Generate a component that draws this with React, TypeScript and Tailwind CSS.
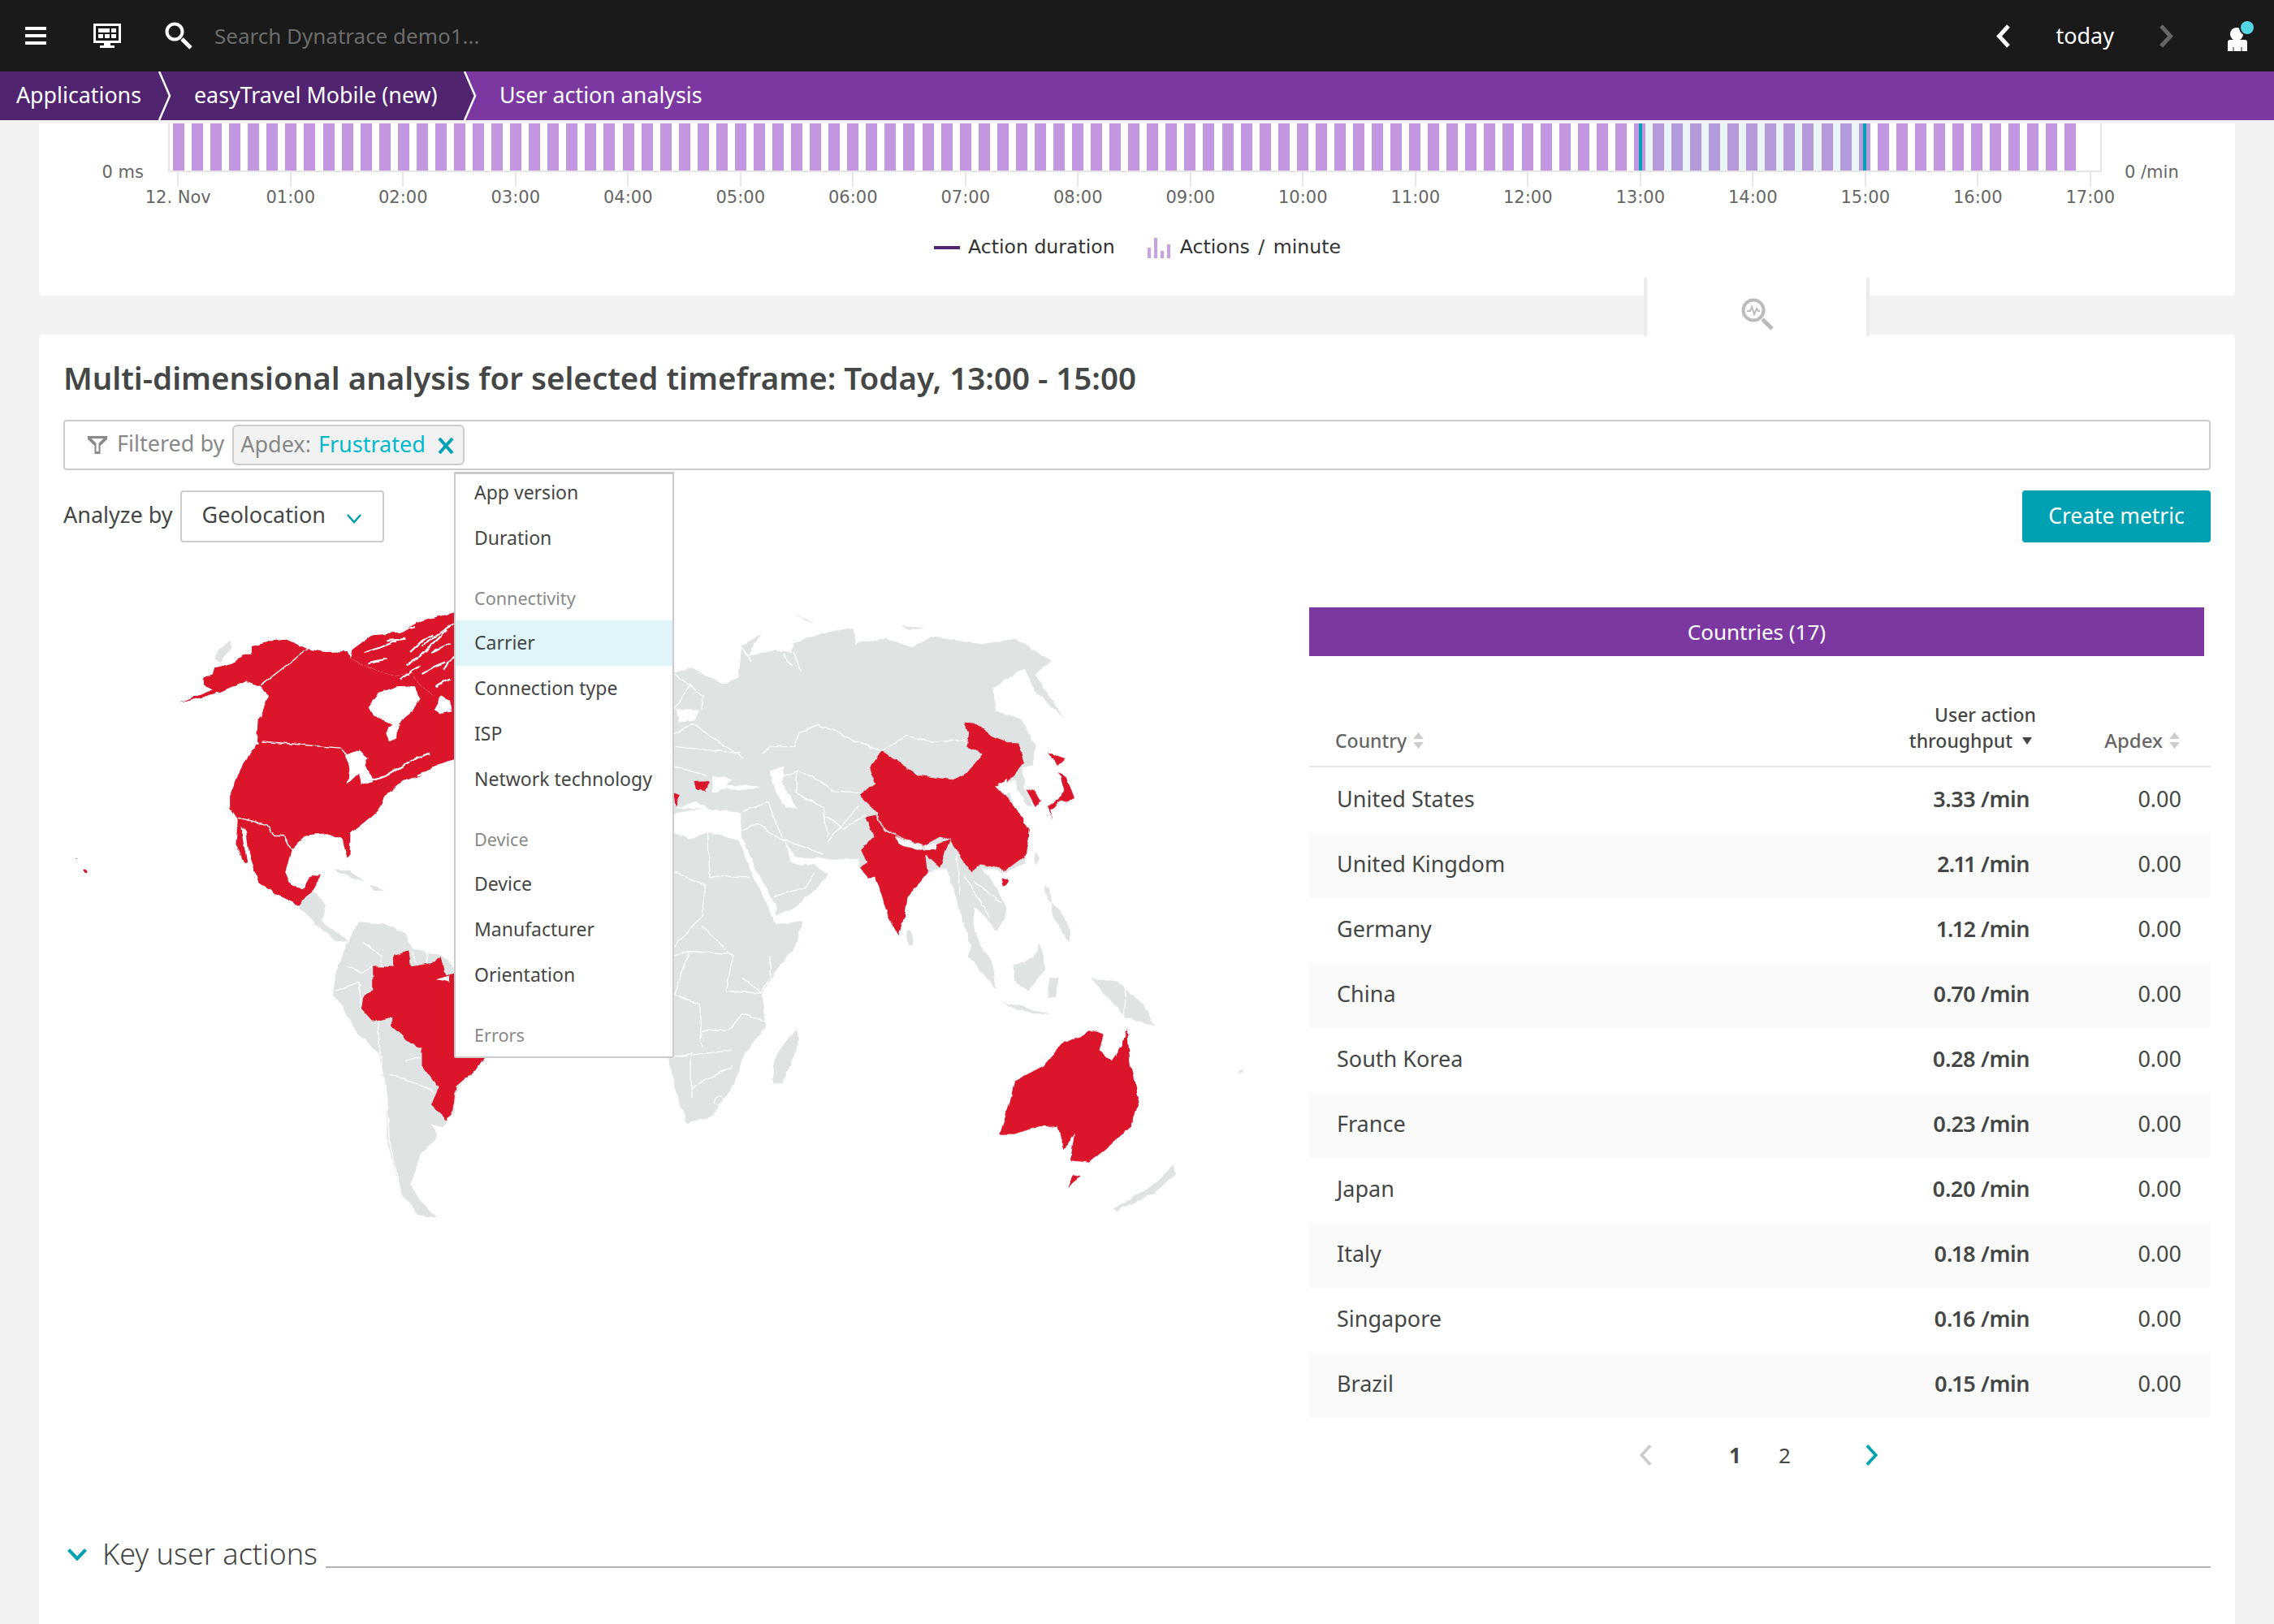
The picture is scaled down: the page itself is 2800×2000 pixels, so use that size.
const hours = ["12. Nov", "01:00", "02:00", "03:00", "04:00", "05:00", "06:00", "07:00", "08:00", "09:00", "10:00", "11:00", "12:00", "13:00", "14:00", "15:00", "16:00", "17:00"];

const bars = Array.from({ length: 102 }, (_, i) => i);

const menu = [
  { label: "App version" },
  { label: "Duration" },
  { label: "Connectivity", header: true },
  { label: "Carrier", active: true },
  { label: "Connection type" },
  { label: "ISP" },
  { label: "Network technology" },
  { label: "Device", header: true },
  { label: "Device" },
  { label: "Manufacturer" },
  { label: "Orientation" },
  { label: "Errors", header: true },
];

const countries = [
  ["United States", "3.33"],
  ["United Kingdom", "2.11"],
  ["Germany", "1.12"],
  ["China", "0.70"],
  ["South Korea", "0.28"],
  ["France", "0.23"],
  ["Japan", "0.20"],
  ["Italy", "0.18"],
  ["Singapore", "0.16"],
  ["Brazil", "0.15"],
];

const SortIcon = () => (
  <svg width="13" height="20" viewBox="0 0 13 20" className="ml-[8px] shrink-0">
    <path d="M6.5 0 13 8H0Z M0 12h13L6.5 20Z" fill="#ccc" />
  </svg>
);

const Chevron = ({ dir, color, w = 17, h = 29, sw = 5 }: { dir: "left" | "right"; color: string; w?: number; h?: number; sw?: number }) => (
  <svg width={w} height={h} viewBox="0 0 17 29" className="shrink-0">
    <path d={dir === "left" ? "M15 2 3.5 14.5 15 27" : "M2 2 13.5 14.5 2 27"} fill="none" stroke={color} strokeWidth={sw} />
  </svg>
);

const WorldMap = () => (
  <svg width="1534" height="800" viewBox="78 748 1534 800" className="shrink-0">
    <defs>
      {/* roughens the traced outlines into coastlines */}
      <filter id="coast" filterUnits="userSpaceOnUse" x="78" y="748" width="1534" height="800">
        <feTurbulence type="fractalNoise" baseFrequency="0.09" numOctaves="2" seed="4" />
        <feDisplacementMap in="SourceGraphic" scale="5" xChannelSelector="R" yChannelSelector="G" />
      </filter>
    </defs>
    <g filter="url(#coast)">
      {/* left half, traced in one scale */}
      <g transform="translate(0 700) scale(0.574 0.542)">
        <path fill="#dfe3e3" d="M460,205 L470,185 495,165 497,180 472,212 Z" />
        <path fill="#dfe3e3" d="M640,770 L655,735 670,730 700,765 690,800 725,830 748,845 720,848 680,810 Z M715,683 L745,685 785,712 750,700 Z M790,720 L825,730 800,733 Z" />
        <path fill="#dfe3e3" d="M745,850 L770,805 830,810 870,830 885,865 945,878 1000,930 1060,1000 1040,1110 985,1175 975,1230 950,1270 925,1260 940,1290 905,1330 880,1400 905,1440 938,1475 900,1470 860,1420 830,1300 830,1200 812,1100 770,1060 715,965 720,920 Z" />
        <path fill="none" stroke="#fff" strokeWidth="2.500" d="M745,905 L775,920 800,905 M720,960 L770,940 775,1000 M810,1030 L815,1100 830,1200 835,1300 860,1420 M870,1120 L905,1110 M835,1150 L905,1175 930,1190 M780,850 L820,880 820,905 M880,870 L895,895 M915,870 L915,895" />
        <path fill="#dc172a" d="M800,905 L845,905 845,880 875,870 880,905 935,895 945,880 955,925 975,920 1000,1000 1040,1110 1020,1140 980,1175 975,1220 958,1255 925,1220 940,1180 905,1130 905,1090 880,1080 840,1040 840,1020 800,1030 775,1000 780,970 800,960 Z" />
        <path fill="#fff" d="M935,935 L965,925 965,940 945,935 Z" />

        <path fill="#dc172a" d="M385,306 L430,287 470,270 520,252 528,256 475,280 425,295 Z M162,658 l6,3 -3,2 Z M178,684 h7 v8 h-5 Z" />
        <path fill="#dc172a" d="M435,248 L458,240 462,225 500,215 525,195 540,195 540,175 575,165 615,162 660,183 700,190 745,188 752,205 790,225 810,235 850,245 880,235 905,270 930,290 968,285 990,300 990,430 960,438 925,452 900,472 860,485 830,512 812,550 772,585 752,600 750,650 743,658 735,615 700,602 655,606 625,640 612,690 625,722 650,728 665,700 690,695 668,735 655,745 640,765 600,745 555,715 548,690 535,650 528,600 510,570 495,545 495,510 515,455 545,412 552,395 555,345 575,290 560,268 525,255 470,280 440,268 Z" />
        <path fill="#dc172a" d="M510,568 L518,575 520,610 530,668 524,670 506,625 Z" />
        <path fill="#dc172a" d="M755,185 L800,150 860,145 900,120 975,100 990,120 990,300 930,290 905,270 880,235 850,245 810,235 752,205 Z" />
        <path fill="none" stroke="#fff" strokeWidth="4" d="M780,192 L815,180 850,165 M820,145 L855,143 890,135 M870,218 L900,200 960,140 M905,240 L930,225 955,215 M880,190 L905,165 930,150 M860,252 L880,235 900,222 M935,268 L965,250 M765,165 L800,135 M905,175 L940,150 975,125 M790,215 L830,205 M925,190 L965,170 M950,230 L975,200 M830,165 L870,160" />
        <path fill="#fff" d="M790,315 L810,285 850,270 890,268 900,295 885,325 855,350 852,385 835,395 828,372 840,355 800,335 Z M930,320 L945,290 965,300 970,325 945,330 Z" />
        <path fill="#fff" d="M740,425 L770,412 790,430 785,450 800,480 775,492 770,465 745,490 750,455 Z" />
        <path fill="none" stroke="#fff" strokeWidth="4" d="M780,490 L830,470 885,435 920,420 M895,470 L945,450" />
        <path fill="none" stroke="#fff" strokeWidth="2.500" d="M560,265 L660,183 M560,393 L730,408 745,425 M510,567 L525,570 570,582 590,608 610,608 625,640" />
        <path fill="none" stroke="#fff" strokeWidth="3" d="M548,375 L552,400 M568,280 L560,340" />
      </g>

      {/* right half, traced in another */}
      <g transform="translate(800 700) scale(0.5102 0.542)">
        <path fill="#dfe3e3" d="M-40,620 L60,600 100,615 140,600 215,618 255,710 295,785 305,810 370,800 350,860 300,920 270,970 280,1040 225,1110 205,1170 150,1245 90,1262 60,1180 45,1110 0,1000 -100,900 -100,700 Z" />
        <path fill="none" stroke="#fff" strokeWidth="2.500" d="M140,600 L145,700 245,700 M60,690 L135,720 125,790 60,860 M125,810 L200,880 185,960 270,965 M95,870 L60,970 M225,930 L270,965 290,930 290,880 M60,880 L95,870 190,875 M60,970 L120,990 125,1090 M125,1050 L190,1050 225,1010 280,1030 M50,1110 L200,1095 M100,1100 L100,1205 M100,1180 L200,1130 M160,1215 a10,8 0 1 0 14,-12 a10,8 0 1 0 -14,12" />
        <path fill="#dfe3e3" d="M40,240 L100,225 130,240 180,262 215,245 222,175 270,150 245,180 240,200 305,185 340,190 350,170 400,150 490,135 498,170 570,160 630,178 680,155 800,172 880,160 970,210 930,240 1000,340 930,280 905,228 880,240 830,270 835,325 895,340 930,400 925,445 900,455 905,500 925,540 905,535 880,480 860,490 880,540 915,590 905,670 860,690 800,680 835,720 860,770 860,795 835,825 810,790 785,770 780,810 800,860 825,890 838,960 770,880 775,860 740,750 715,680 675,690 620,750 545,700 505,680 505,660 440,662 400,655 395,670 430,695 400,730 350,770 305,788 305,765 265,700 225,618 220,585 220,555 130,545 40,560 Z" />
        <path fill="#fff" d="M150,510 L152,470 200,480 180,492 270,495 240,503 180,502 Z M290,460 L325,450 320,490 355,545 330,545 305,510 Z M65,320 L120,320 110,345 70,350 Z M325,620 L350,655 400,660 395,672 365,675 340,665 Z M105,235 L175,255 130,240 Z M60,545 L110,530 140,545 Z" />
        <path fill="none" stroke="#fff" strokeWidth="3" d="M345,190 L365,235 M320,195 L345,220 M225,180 L245,210" />
        <path fill="none" stroke="#fff" strokeWidth="2.500" d="M272,420 L290,405 350,405 360,375 405,355 450,370 500,395 560,415 M560,415 L620,380 680,395 760,390 770,405 M300,480 L355,460 400,475 440,505 510,510 M355,460 L355,510 420,545 M420,545 L430,610 M420,560 L470,590 520,560 M285,530 L320,615 420,650 M430,620 L505,540 M225,550 L285,530 M225,595 L260,580 325,620 M300,745 L375,725 400,690 M740,650 L750,740 M780,710 L850,760 M760,700 L820,790 M57,380 L105,350 M60,405 L220,420 M100,350 L160,390 225,430 M60,450 L135,470 M60,240 L130,290 125,320 M100,260 L60,320" />
        <path fill="#dfe3e3" d="M350,103 L400,125 375,118 Z M600,130 L665,135 630,140 Z M930,645 q8,0 8,14 t-6,14 q-6,-6 -2,-28 Z M622,820 q14,8 14,26 t-8,10 q-8,-12 -6,-36 Z" />
        <path fill="#dfe3e3" d="M950,720 L965,730 972,790 1010,850 1015,820 985,770 960,755 Z M875,905 L930,880 940,850 955,910 915,960 885,945 Z M845,985 L900,995 970,1015 905,1008 Z M965,930 L985,930 980,975 962,975 Z M1065,930 L1130,940 1190,990 1220,1040 1150,1020 1090,960 Z M355,1045 L360,1080 320,1170 298,1170 300,1120 320,1085 Z M1120,1455 L1210,1405 1265,1355 1270,1375 1215,1420 1125,1460 Z M1420,1140 h10 v5 h-10 Z" />
        <path fill="none" stroke="#fff" strokeWidth="2.500" d="M1150,950 L1145,1020" />

        <path fill="#dc172a" d="M760,350 L790,352 825,380 865,395 890,395 905,440 860,490 835,495 880,540 915,590 910,650 860,685 800,672 775,690 745,650 725,615 700,610 660,630 590,605 565,590 545,550 505,515 545,490 530,455 560,415 600,440 650,470 730,480 765,465 805,420 765,405 770,380 Z M848,706 h14 v14 l-10,2 Z" />
        <path fill="#fff" d="M840,490 L862,478 870,505 855,515 Z" />
        <path fill="#dc172a" d="M520,565 L545,560 565,595 660,640 700,625 725,615 700,680 665,650 670,690 620,750 612,800 600,835 575,790 545,700 530,705 505,680 525,670 510,640 540,610 Z" />
        <path fill="#fff" d="M590,610 L660,632 655,640 600,628 Z M665,630 L695,625 690,640 665,640 Z" />
        <path fill="#dc172a" d="M910,505 L925,500 945,530 930,540 Z M962,418 L1003,432 985,447 975,435 Z M988,463 L1005,475 1025,520 1005,530 990,528 968,548 975,570 960,540 985,525 1000,505 Z M107,485 L148,483 135,505 112,503 Z M57,510 L75,515 62,540 Z" />
        <path fill="#dc172a" d="M845,1285 L870,1210 880,1165 950,1130 1000,1075 1040,1065 1060,1050 1095,1060 1085,1095 1115,1120 1140,1085 1152,1045 1160,1130 1182,1210 1160,1270 1100,1320 1060,1350 1015,1345 1025,1285 1000,1320 985,1270 950,1265 880,1285 Z M1020,1378 L1040,1382 1008,1405 Z" />
      </g>
    </g>
  </svg>
);

export default function App() {
  return (
    <div className="relative flex h-[2000px] w-[2800px] flex-col overflow-hidden bg-[#f2f2f2] font-['Noto_Sans',sans-serif] text-[#454646]">
      {/* top bar */}
      <header className="flex h-[88px] shrink-0 items-center bg-[#1a1a1a]">
        <svg width="26" height="24" viewBox="0 0 26 24" className="ml-[31px] shrink-0">
          <path d="M0 1h26v4H0zM0 10h26v4H0zM0 19h26v4H0z" fill="#fff" />
        </svg>
        <svg width="34" height="30" viewBox="0 0 34 30" className="ml-[58px] shrink-0">
          <path fillRule="evenodd" d="M0 0h34v24H21v3h5v3H8v-3h5v-3H0Zm3 3v18h28V3Z" fill="#fff" />
          <path d="M6 6h14v5H6zM22 6h6v5h-6zM6 13h6v5H6zM14 13h6v5h-6zM22 13h6v5h-6z" fill="#fff" />
        </svg>
        <svg width="34" height="34" viewBox="0 0 34 34" className="ml-[54px] shrink-0">
          <circle cx="12" cy="12" r="9.5" fill="none" stroke="#fff" strokeWidth="4" />
          <path d="M21 21 32 32" stroke="#fff" strokeWidth="5" />
        </svg>
        <span className="ml-[27px] text-[26px] text-[#6b6b6b]">Search Dynatrace demo1...</span>
        <div className="ml-auto flex items-center">
          <Chevron dir="left" color="#fff" />
          <span className="ml-[56px] text-[27px] text-white">today</span>
          <span className="ml-[56px]">
            <Chevron dir="right" color="#666" />
          </span>
          <svg width="36" height="40" viewBox="0 0 36 40" className="ml-[66px] mr-[22px] shrink-0">
            <circle cx="12" cy="18" r="8" fill="#fff" />
            <path d="M1 28a3 3 0 0 1 3-3h18a3 3 0 0 1 3 3v11H1Z" fill="#fff" />
            <path d="M8 34v5M18 34v5" stroke="#1a1a1a" strokeWidth="1" />
            <circle cx="25" cy="10" r="10" fill="#1a1a1a" />
            <circle cx="25" cy="10" r="8" fill="#52d6e5" />
          </svg>
        </div>
      </header>

      {/* breadcrumb */}
      <nav className="flex h-[60px] shrink-0 items-center bg-[#7c38a1] pb-[2px] text-[26.8px] text-white">
        <div className="relative z-10 -mb-[2px] flex h-[60px] w-[197px] items-center bg-[#512470] pb-[2px] pl-[20px]">
          Applications
          <svg width="16" height="60" viewBox="0 0 16 60" className="absolute right-[-14px] top-0">
            <path d="M0 0H2L14 30 2 60H0Z" fill="#512470" />
            <path d="M1 0 14 30 1 60" fill="none" stroke="#fff" strokeWidth="2.5" />
          </svg>
        </div>
        <div className="relative -mb-[2px] flex h-[60px] w-[376px] items-center bg-[#512470] pb-[2px] pl-[42px]">
          easyTravel Mobile (new)
          <svg width="16" height="60" viewBox="0 0 16 60" className="absolute right-[-14px] top-0">
            <path d="M0 0H2L14 30 2 60H0Z" fill="#512470" />
            <path d="M1 0 14 30 1 60" fill="none" stroke="#fff" strokeWidth="2.5" />
          </svg>
        </div>
        <span className="pl-[42px]">User action analysis</span>
      </nav>

      <main className="flex flex-1 flex-col px-[48px] pt-[4px]">
        {/* chart card */}
        <section className="h-[212px] shrink-0 rounded-b-[4px] bg-white font-['DejaVu_Sans',sans-serif] text-[21px] text-[#666]">
          <div className="flex items-end">
            <span className="mb-[-16px] w-[159px] shrink-0 pr-[30px] text-right">0 ms</span>
            <div className="relative flex h-[60px] w-[2381px] shrink-0 gap-[9.07px] border-x-2 border-b-2 border-[#e6e6e6] pl-[4px]">
              <div className="absolute bottom-0 left-[1810px] top-0 w-[279px] bg-[#e9f5f7]" />
              {bars.map((i) => (
                <div
                  key={i}
                  className={`relative h-full w-[14px] shrink-0 ${i > 78 && i < 91 ? "bg-[#b49adb]" : "bg-[#c396e0]"}`}
                />
              ))}
              <div className="absolute bottom-0 left-[1809px] top-0 w-[4px] bg-[#00a1b2]" />
              <div className="absolute bottom-0 left-[2085px] top-0 w-[4px] bg-[#00a1b2]" />
            </div>
            <span className="mb-[-16px] ml-[28px]">0 /min</span>
          </div>
          <div className="ml-[102px] flex">
            {hours.map((h) => (
              <div key={h} className="flex w-[138.5px] shrink-0 flex-col items-center">
                <div className="h-[18px] w-[2px] bg-[#e6e6e6]" />
                <span className="leading-[26px]">{h}</span>
              </div>
            ))}
          </div>
          <div className="ml-[1102px] mt-[31px] flex items-center text-[#333]">
            <div className="h-[4px] w-[32px] bg-[#512470]" />
            <span className="ml-[10px] text-[23.6px]">Action duration</span>
            <svg width="28" height="26" viewBox="0 0 28 26" className="ml-[40px] shrink-0">
              <path d="M0 13h4v13H0zM8 1h4v25H8zM16 17h4v9h-4zM24 9h4v17h-4z" fill="#c9a0e6" />
            </svg>
            <span className="ml-[12px] text-[23.6px] [word-spacing:3px]">Actions / minute</span>
          </div>
        </section>

        {/* analysis card */}
        <section className="relative mt-[48px] flex flex-1 flex-col rounded-t-[4px] bg-white px-[30px] pt-[32px]">
          <h1 className="text-[38.5px] font-semibold leading-[42px]">Multi-dimensional analysis for selected timeframe: Today, 13:00 - 15:00</h1>

          <div className="mt-[31px] flex h-[62px] w-[2644px] items-center rounded-[4px] border-2 border-[#ccc] pl-[28px] text-[27px] text-[#888]">
            <svg width="24" height="22" viewBox="0 0 24 22" className="shrink-0">
              <path fillRule="evenodd" d="M0 0h24v4l-8.500 8v10h-7V12L0 4Zm4.500 3 6 6v10h3V9l6-6Z" fill="#888" />
            </svg>
            <span className="ml-[12px] pb-[3px]">Filtered by</span>
            <div className="ml-[10px] flex h-[50px] w-[286px] items-center rounded-[6px] border-2 border-[#ccc] bg-[#f2f2f2] pb-[2px] pl-[8px]">
              <span>Apdex:</span>
              <span className="ml-[9px] text-[#00b9cc]">Frustrated</span>
              <svg width="20" height="20" viewBox="0 0 20 20" className="ml-[15px] mt-[3px] shrink-0">
                <path d="M2 1 18 19M18 1 2 19" stroke="#00a1b2" strokeWidth="4" />
              </svg>
            </div>
          </div>

          <div className="mt-[25px] flex h-[64px] w-[2644px] items-center text-[27px]">
            <span className="pb-[3px]">Analyze by</span>
            <div className="ml-[9px] flex h-full w-[251px] items-center rounded-[4px] border-2 border-[#ccc] pb-[3px] pl-[25px]">
              Geolocation
              <svg width="18" height="12" viewBox="0 0 18 12" className="ml-[26px] mt-[9px] shrink-0">
                <path d="M1 1 9 10 17 1" fill="none" stroke="#00a1b2" strokeWidth="2.5" />
              </svg>
            </div>
            <button className="ml-auto flex h-full w-[232px] items-center justify-center rounded-[4px] bg-[#00a1b2] text-[26.4px] text-white">Create metric</button>
          </div>

          <div className="mt-[80px] flex">
            <WorldMap />
            <div className="w-[1110px] shrink-0">
              <div className="flex h-[60px] w-[1102px] items-center justify-center bg-[#7c38a1] text-[26px] text-white">Countries (17)</div>
              <div className="flex h-[137px] items-end border-b-2 border-[#e6e6e6] pb-[15px] text-[23px] font-medium leading-[32px]">
                <div className="flex flex-1 items-center pl-[32px] text-[#666]">
                  Country
                  <SortIcon />
                </div>
                <div className="flex w-[200px] flex-col items-end">
                  <span>User action</span>
                  <span className="flex items-center pr-[5px]">
                    throughput
                    <svg width="12" height="9" viewBox="0 0 12 9" className="ml-[12px] shrink-0">
                      <path d="M0 0h12L6 9Z" fill="#454646" />
                    </svg>
                  </span>
                </div>
                <div className="flex w-[177px] items-center justify-end text-[24px] text-[#666]">
                  Apdex
                  <SortIcon />
                </div>
                <div className="w-[38px]" />
              </div>
              {countries.map(([name, value], i) => (
                <div key={name} className={`flex h-[80px] items-center pb-[2px] pl-[34px] pr-[36px] text-[27px] ${i % 2 === 1 ? "bg-[#fafafa]" : ""}`}>
                  <span className="flex-1">{name}</span>
                  <span className="font-semibold tracking-[-0.4px] proportional-nums">
                    {value} /min
                  </span>
                  <span className="w-[187px] text-right">0.00</span>
                </div>
              ))}
              <div className="mt-[27px] flex h-[40px] items-center pl-[406px] text-[26px]">
                <Chevron dir="left" color="#ccc" w={16} h={28} sw={4} />
                <span className="ml-[95px] font-bold">1</span>
                <span className="ml-[46px]">2</span>
                <span className="ml-[92px]">
                  <Chevron dir="right" color="#00a1b2" w={16} h={28} sw={4} />
                </span>
              </div>
            </div>
          </div>

          <div className="mt-[78px] flex h-[48px] w-[2644px] items-end">
            <svg width="24" height="15" viewBox="0 0 24 15" className="mb-[16px] ml-[5px] shrink-0">
              <path d="M1.500 1.500 12 12.500 22.500 1.500" fill="none" stroke="#00a1b2" strokeWidth="4" />
            </svg>
            <span className="ml-[19px] text-[36px] font-light leading-[48px]">Key user actions</span>
            <div className="mb-[7px] ml-[10px] h-[2px] flex-1 bg-[#b3b3b3]" />
          </div>

          {/* dropdown menu */}
          <div className="absolute left-[511px] top-[169px] z-10 h-[722px] w-[271px] overflow-hidden rounded-b-[2px] border-x-2 border-b-2 border-t-[3px] border-[#ccc] bg-white">
            <ul className="-mt-[5px]">
              {menu.map((m) =>
                m.header ? (
                  <li key={m.label + "h"} className="flex h-[73px] items-end pb-[11px] pl-[23px] text-[21.6px] text-[#898989]">{m.label}</li>
                ) : (
                  <li key={m.label} className={`flex h-[56px] items-center pb-[1px] pl-[23px] text-[23px] ${m.active ? "bg-[#e0f5f9]" : ""}`}>{m.label}</li>
                )
              )}
            </ul>
          </div>
        </section>

        {/* zoom tab below selected timeframe */}
        <div className="absolute left-[2024px] top-[342px] flex h-[72px] w-[278px] items-center justify-center border-x-4 border-[#ececec] bg-white pl-[2px] pt-[18px]">
          <svg width="40" height="40" viewBox="0 0 40 40">
            <circle cx="15" cy="15" r="12.500" fill="none" stroke="#bbb" strokeWidth="4" />
            <path d="M7 16h4l2-5 3 9 3-7 2 3h2" fill="none" stroke="#bbb" strokeWidth="2" />
            <path d="M26 26 38 38" stroke="#bbb" strokeWidth="5" />
          </svg>
        </div>
      </main>
    </div>
  );
}
